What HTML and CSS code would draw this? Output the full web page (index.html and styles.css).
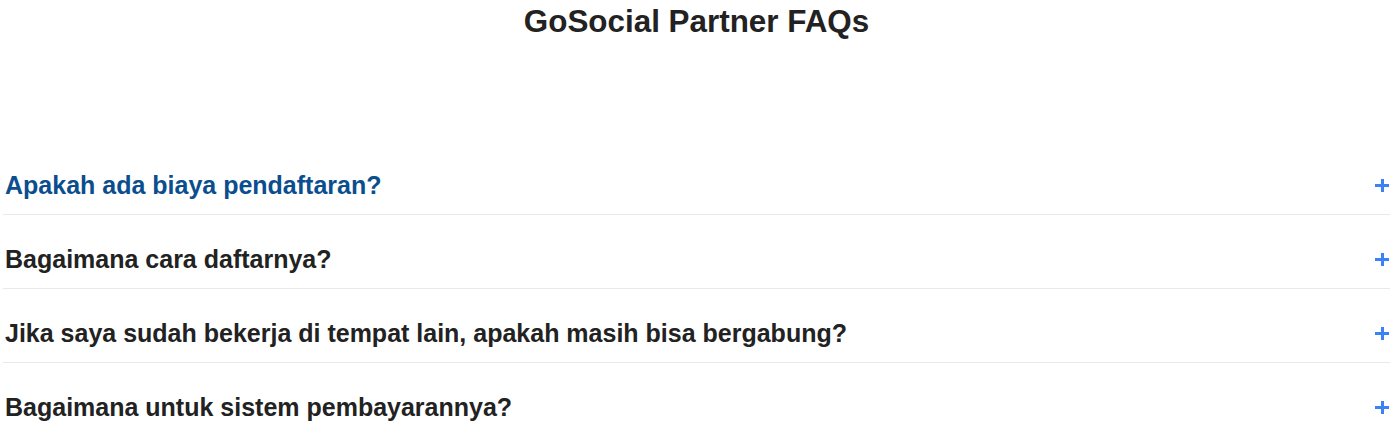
FILE: index.html
```html
<!DOCTYPE html>
<html lang="id">
<head>
<meta charset="utf-8">
<title>GoSocial Partner FAQs</title>
<link rel="stylesheet" href="styles.css">
</head>
<body>
<main class="page">
  <h1 class="title">GoSocial Partner FAQs</h1>
  <div class="faq-list">
    <div class="faq-item">
      <button class="faq-q active"><span>Apakah ada biaya pendaftaran?</span><span class="plus"></span></button>
    </div>
    <div class="faq-item">
      <button class="faq-q"><span>Bagaimana cara daftarnya?</span><span class="plus"></span></button>
    </div>
    <div class="faq-item">
      <button class="faq-q"><span>Jika saya sudah bekerja di tempat lain, apakah masih bisa bergabung?</span><span class="plus"></span></button>
    </div>
    <div class="faq-item">
      <button class="faq-q"><span>Bagaimana untuk sistem pembayarannya?</span><span class="plus"></span></button>
    </div>
  </div>
</main>
</body>
</html>
```
FILE: styles.css
```css
* { box-sizing: border-box; }
html, body { margin: 0; padding: 0; background: #fff; }
body { font-family: "Liberation Sans", Arial, sans-serif; color: #222; }
.page { padding: 0 8px 0 3px; }
.title {
  margin: 0;
  padding-top: 4px;
  height: 141px;
  text-align: center;
  font-size: 31.4px;
  line-height: 36px;
  font-weight: 700;
  color: #222;
}
.faq-item { border-bottom: 1px solid #e8e9ef; }
.faq-item:last-child { border-bottom: none; }
.faq-q {
  display: flex;
  width: 100%;
  align-items: center;
  justify-content: space-between;
  padding: 29px 1px 14px 2px;
  margin: 0;
  border: 0;
  background: none;
  font-family: inherit;
  font-size: 25px;
  line-height: 30px;
  font-weight: 700;
  color: #222;
  text-align: left;
  cursor: pointer;
}
.faq-q.active { color: #0b4e8e; }
.plus {
  position: relative;
  width: 14px;
  height: 13px;
  flex: none;
}
.plus::before, .plus::after {
  content: "";
  position: absolute;
  background: #3b82f6;
}
.plus::before { left: 0; right: 0; top: 5px; height: 3px; }
.plus::after { top: 0; bottom: 0; left: 5.5px; width: 3px; }
```
